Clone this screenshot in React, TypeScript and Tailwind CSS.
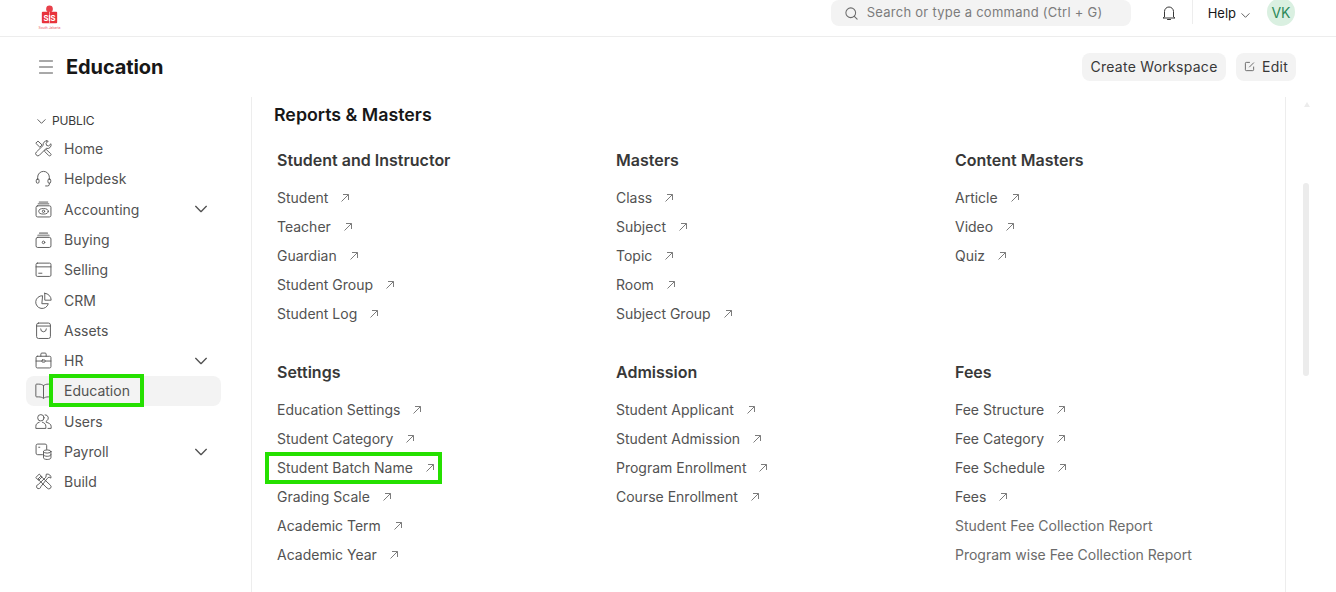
import { ReactNode } from "react";

const ic = "w-[17px] h-[17px] text-[#5a5a5a] shrink-0";

const Svg = ({ children }: { children: ReactNode }) => (
  <svg viewBox="0 0 16 16" fill="none" stroke="currentColor" strokeWidth="0.9" strokeLinecap="round" strokeLinejoin="round" className={ic}>
    {children}
  </svg>
);

const ICONS: Record<string, ReactNode> = {
  Home: (
    <Svg>
      <path d="M11 .8a3.400 3.400 0 0 0-3.300 4.300L1.300 11.300a2 2 0 0 0 2.900 3l6.400-6.500a3.400 3.400 0 0 0 4.400-4.300L12.900 5.600 10.900 5.100 10.400 3.100 12.400 1.100A3.400 3.400 0 0 0 11 .8Z" />
      <path d="M1 2.800 2.800 1l3.900 3.700-1.900 1.800ZM9 10.200l1.400-1.400 4.300 4a1.200 1.200 0 0 1-1.800 1.800Z" />
    </Svg>
  ),
  Helpdesk: (
    <Svg>
      <path d="M2.500 9V6.800a5.500 5.500 0 0 1 11 0V9" />
      <rect x="1.200" y="8.400" width="2.600" height="4" rx="1.200" />
      <rect x="12.200" y="8.400" width="2.600" height="4" rx="1.200" />
      <path d="M13.500 12.400v1a1.600 1.600 0 0 1-1.600 1.600H10" />
    </Svg>
  ),
  Accounting: (
    <Svg>
      <rect x="1" y="4.500" width="14" height="10.500" rx="1.500" />
      <path d="M3 2.700h10M4 1h8" />
      <ellipse cx="8" cy="9.700" rx="4.500" ry="2.600" />
      <circle cx="8" cy="9.700" r="1.100" />
    </Svg>
  ),
  Buying: (
    <Svg>
      <rect x="1" y="6" width="14" height="9.500" rx="1.500" />
      <path d="M3 4.200h10M4.500 2h7" strokeWidth="1.700" className="opacity-60" />
      <circle cx="8" cy="10.700" r="1.200" />
    </Svg>
  ),
  Selling: (
    <Svg>
      <rect x="1" y="2" width="14" height="12.500" rx="1.200" />
      <path d="M1 5.500h14M3.500 11.500h3" />
    </Svg>
  ),
  CRM: (
    <Svg>
      <path d="M6.800 3.500a6 6 0 1 0 5.700 7.500H6.800Z" />
      <path d="M9.200 1.200v6.500h6a6.300 6.300 0 0 0-6-6.500Z" />
    </Svg>
  ),
  Assets: (
    <Svg>
      <rect x="1.500" y="1" width="13" height="14.500" rx="1.800" />
      <path d="M1.500 3.800h13M5.300 6.500a2.700 2.700 0 0 0 5.400 0" />
    </Svg>
  ),
  HR: (
    <Svg>
      <rect x="1" y="4" width="14" height="11" rx="1.200" />
      <path d="M5.500 4V2a1 1 0 0 1 1-1h3a1 1 0 0 1 1 1v2M1 8.500h5.500M9.500 8.500H15" />
      <rect x="6.500" y="7.500" width="3" height="2" rx="0.500" />
    </Svg>
  ),
  Education: (
    <Svg>
      <path d="M8 3.500C7 2.500 5.500 2 3.500 2H1.500a.7.7 0 0 0-.7.700v10.600a.7.700 0 0 0 .7.700h2c2 0 3.500.5 4.500 1.500 1-1 2.500-1.500 4.500-1.500h2a.7.700 0 0 0 .7-.7V2.700a.7.700 0 0 0-.7-.7h-2c-2 0-3.500.5-4.500 1.500ZM8 3.500V15" />
    </Svg>
  ),
  Users: (
    <Svg>
      <circle cx="5.500" cy="4.500" r="3" />
      <path d="M4 8.700C2 9.300.8 10.500.8 12.500v2h9.400v-2c0-2-1.200-3.200-3.200-3.800" />
      <path d="M9.500 1.700a3 3 0 0 1 1.500 5.600c-.3.500-.5 1-.5 1.400 2.500.6 4.700 1.800 4.700 3.800v2h-3" />
    </Svg>
  ),
  Payroll: (
    <Svg>
      <path d="M7 11H2.500A1.500 1.500 0 0 1 1 9.500v-7A1.500 1.500 0 0 1 2.500 1h7A1.500 1.500 0 0 1 11 2.500V6" />
      <path d="M3.500 4h1" />
      <ellipse cx="11.500" cy="8" rx="3.500" ry="1.500" />
      <path d="M8 8v6c0 .8 1.500 1.500 3.500 1.500S15 14.800 15 14V8M8 11c0 .8 1.500 1.500 3.500 1.500S15 11.800 15 11" />
    </Svg>
  ),
  Build: (
    <Svg>
      <path d="M3 5.500 5.500 3l9 8.500a2 2 0 0 1-2.900 2.900Z" />
      <path d="M1 4 4 1l2.700 2.700-3 3ZM11 1a3.300 3.300 0 0 1 4 3.800L13.200 3.800l-1.500 1.200-6.200 7.800A2.100 2.100 0 0 1 1.800 14a2.100 2.100 0 0 1 1.300-3.200L10 4.200Z" />
    </Svg>
  ),
};

const NAV = [
  { name: "Home" },
  { name: "Helpdesk" },
  { name: "Accounting", more: true },
  { name: "Buying" },
  { name: "Selling" },
  { name: "CRM" },
  { name: "Assets" },
  { name: "HR", more: true },
  { name: "Education", active: true },
  { name: "Users" },
  { name: "Payroll", more: true },
  { name: "Build" },
];

const SECTIONS = [
  [
    { title: "Student and Instructor", links: ["Student", "Teacher", "Guardian", "Student Group", "Student Log"] },
    { title: "Masters", links: ["Class", "Subject", "Topic", "Room", "Subject Group"] },
    { title: "Content Masters", links: ["Article", "Video", "Quiz"] },
  ],
  [
    { title: "Settings", links: ["Education Settings", "Student Category", "Student Batch Name", "Grading Scale", "Academic Term", "Academic Year"] },
    { title: "Admission", links: ["Student Applicant", "Student Admission", "Program Enrollment", "Course Enrollment"] },
    { title: "Fees", links: ["Fee Structure", "Fee Category", "Fee Schedule", "Fees", "Student Fee Collection Report", "Program wise Fee Collection Report"] },
  ],
];

const NO_ARROW = ["Student Fee Collection Report", "Program wise Fee Collection Report"];

const Chevron = ({ className }: { className: string }) => (
  <svg viewBox="0 0 12 12" fill="none" stroke="currentColor" strokeWidth="1" strokeLinecap="round" strokeLinejoin="round" className={className}>
    <path d="M2 4l4 4 4-4" />
  </svg>
);

function LinkRow({ label }: { label: string }) {
  const hl = label === "Student Batch Name";
  return (
    <div className="relative h-[29px] flex items-center text-[14px] text-[#525252]">
      <span className={NO_ARROW.includes(label) ? "text-[#6b6b6b]" : ""}>{label}</span>
      {!NO_ARROW.includes(label) && (
        <svg viewBox="0 0 10 10" fill="none" stroke="#7c7c7c" strokeWidth="1" className="w-[10px] h-[10px] ml-[12px]">
          <path d="M1.500 8.500 8.500 1.500M3 1.500h5.500V7" />
        </svg>
      )}
      {hl && <div className="absolute left-[-12px] top-[-1px] w-[177px] h-[32px] border-[4px] border-[#25e000]" />}
    </div>
  );
}

export default function App() {
  return (
    <div className="w-[1336px] h-[592px] overflow-hidden bg-white font-['Inter',sans-serif] text-[#383838] flex flex-col">
      {/* Navbar */}
      <header className="h-[37px] shrink-0 border-b border-[#ededed] flex items-center pl-[38px] pr-[41px]">
        <svg viewBox="0 0 24 26" className="w-[23px] h-[25px] mt-[-2px]">
          <circle cx="12" cy="4" r="3.500" fill="#e8404a" />
          <rect x="4" y="7" width="16" height="12" rx="1" fill="#e8333c" />
          <path d="M12 7v12" stroke="#fff" strokeWidth="0.6" />
          <text x="12" y="16.500" textAnchor="middle" fontSize="8" fontWeight="700" fill="#fff" fontFamily="Inter">SIS</text>
          <text x="12" y="24.500" textAnchor="middle" fontSize="3.500" fill="#e8535c" fontFamily="Inter">South Jakarta</text>
        </svg>
        <div className="ml-auto h-[36px] flex items-start">
          <div className="w-[300px] h-[26px] bg-[#f3f3f3] rounded-lg flex items-center pl-[13px] text-[13px] tracking-[0.02em] text-[#7c7c7c]">
            <svg viewBox="0 0 16 16" fill="none" stroke="#6b6b6b" strokeWidth="1.100" strokeLinecap="round" className="w-[15px] h-[15px] mr-[8px]">
              <circle cx="7.200" cy="7.200" r="5.200" />
              <path d="M11 11l3 3" />
            </svg>
            Search or type a command (Ctrl + G)
          </div>
          <svg viewBox="0 0 16 16" fill="none" stroke="#383838" strokeWidth="1" strokeLinejoin="round" className="w-[16px] h-[16px] ml-[30px] mt-[5px]">
            <path d="M3.500 12V6.500a4.500 4.500 0 0 1 9 0V12l1.500 1H2Z" />
            <path d="M6.500 14.500h3" strokeLinecap="round" />
          </svg>
          <div className="w-px h-[24px] bg-[#ededed] ml-[15px]" />
          <span className="ml-[15px] mt-[4px] text-[13px] leading-[18px] text-[#171717]">Help</span>
          <Chevron className="w-[11px] h-[11px] ml-[4px] mt-[10px] text-[#525252]" />
          <div className="w-[28px] h-[28px] rounded-full bg-[#daf0e1] text-[#2d8a5a] text-[14px] flex items-center justify-center ml-[16px] mt-[-2px]">VK</div>
        </div>
      </header>

      {/* Page head */}
      <div className="h-[60px] shrink-0 flex items-center pl-[39px] pr-[40px]">
        <svg viewBox="0 0 14 14" fill="none" stroke="#525252" strokeWidth="1" strokeLinecap="round" className="w-[14px] h-[14px]">
          <path d="M.500 1h13M.500 7h13M.500 13h13" />
        </svg>
        <h1 className="ml-[13px] text-[20px] tracking-[-0.005em] font-bold text-[#171717]">Education</h1>
        <div className="ml-auto flex gap-[10px]">
          <button className="h-[28px] w-[144px] pb-[1px] bg-[#f3f3f3] rounded-lg text-[14px] tracking-[0.02em] text-[#383838]">Create Workspace</button>
          <button className="h-[28px] w-[60px] pb-[1px] bg-[#f3f3f3] rounded-lg text-[14px] tracking-[0.02em] text-[#383838] flex items-center justify-center gap-[7px]">
            <svg viewBox="0 0 12 12" fill="none" stroke="#525252" strokeWidth="0.900" strokeLinecap="round" className="w-[11px] h-[11px]">
              <path d="M10.500 6.500v3a1 1 0 0 1-1 1h-7a1 1 0 0 1-1-1v-7a1 1 0 0 1 1-1h3.500M6 6.500l4.500-4.500" />
            </svg>
            Edit
          </button>
        </div>
      </div>

      <div className="flex flex-1 min-h-0">
        {/* Sidebar */}
        <aside className="w-[252px] shrink-0 border-r border-[#ededed] pl-[26px] pt-[14px]">
          <div className="h-[20px] flex items-center pl-[10px] text-[12px] tracking-[-0.01em] text-[#383838]">
            <Chevron className="w-[11px] h-[11px] mr-[5px] text-[#525252]" />
            PUBLIC
          </div>
          <div className="mt-[2.400px] w-[195px]">
            {NAV.map((n) => (
              <div key={n.name} className={"relative h-[30.3px] flex items-center pl-[9px] pr-[12px] text-[14px] text-[#525252] rounded-lg " + (n.active ? "bg-[#f3f3f3]" : "")}>
                {ICONS[n.name]}
                <span className="ml-[12px]">{n.name}</span>
                {n.more && <Chevron className="w-[16px] h-[16px] ml-auto text-[#525252]" />}
                {n.active && <div className="absolute left-[23px] top-[-2px] w-[95px] h-[33px] border-[4px] border-[#25e000]" />}
              </div>
            ))}
          </div>
        </aside>

        {/* Content */}
        <main className="w-[1034px] shrink-0 border-r border-[#ededed] pl-[22px] pt-[6px]">
          <h2 className="h-[24px] text-[17.800px] leading-[24px] font-semibold text-[#171717]">Reports &amp; Masters</h2>
          {SECTIONS.map((row, i) => (
            <div key={i} className={"grid grid-cols-[339px_339px_339px] pl-[3px] " + (i === 0 ? "mt-[21px]" : "mt-[32px]")}>
              {row.map((sec) => (
                <div key={sec.title}>
                  <h3 className="h-[24px] text-[16px] leading-[24px] font-semibold text-[#383838]">{sec.title}</h3>
                  <div className="mt-[11px]">
                    {sec.links.map((l) => (
                      <LinkRow key={l} label={l} />
                    ))}
                  </div>
                </div>
              ))}
            </div>
          ))}
        </main>

        {/* Scrollbar */}
        <div className="flex-1 relative pl-[17px] pt-[5px]">
          <div className="w-0 h-0 ml-[0.5px] border-x-[3px] border-x-transparent border-b-[5px] border-b-[#ececec]" />
          <div className="w-[6px] h-[193px] mt-[76px] rounded-full bg-[#ececec]" />
        </div>
      </div>
    </div>
  );
}
